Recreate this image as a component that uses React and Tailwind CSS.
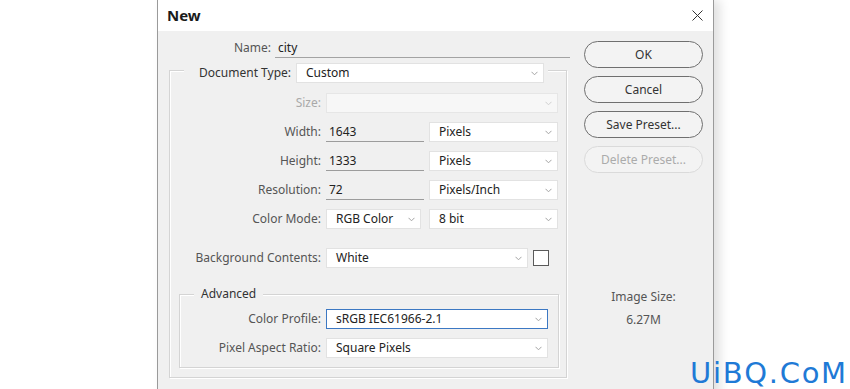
import React from "react";

const font = { fontFamily: '"Noto Sans", "Open Sans", sans-serif' };

function Chevron({ light }) {
  return (
    <svg width="7" height="5" viewBox="0 0 7 5" className="shrink-0">
      <polyline
        points="0.5,0.8 3.5,3.8 6.5,0.8"
        fill="none"
        stroke={light ? "#cfcfcf" : "#a3a3a3"}
        strokeWidth="1"
      />
    </svg>
  );
}

function Select({ value, width, disabled, focused }) {
  return (
    <div
      className={
        "flex items-center justify-between h-5 pl-[9px] pr-[5px] shrink-0 border " +
        (focused
          ? "border-[#3c78c3] bg-white"
          : disabled
          ? "border-[#e6e6e6] bg-[#f7f7f7]"
          : "border-[#e2e2e2] bg-white")
      }
      style={{ width }}
    >
      <span className="text-[#222] whitespace-nowrap">{value}</span>
      <Chevron light={disabled} />
    </div>
  );
}

function Field({ value }) {
  return (
    <div className="w-[98px] h-5 shrink-0 border-b border-[#9c9c9c] flex items-center pl-[3px] text-[#222]">
      {value}
    </div>
  );
}

function Row({ label, labelWidth, disabled, children }) {
  return (
    <div className="flex items-center h-5 gap-[5px]">
      <span
        className={
          "text-right whitespace-nowrap shrink-0 " + (disabled ? "text-[#a9a9a9]" : "text-[#555]")
        }
        style={{ width: labelWidth }}
      >
        {label}
      </span>
      {children}
    </div>
  );
}

function Button({ children, disabled }) {
  return (
    <div
      className={
        "h-[27px] rounded-full border flex items-center justify-center bg-[#f3f3f3] " +
        (disabled ? "border-[#dadada] text-[#ababab]" : "border-[#6f6f6f] text-[#333]")
      }
    >
      {children}
    </div>
  );
}

export default function App() {
  return (
    <div className="relative h-[389px] w-[850px] overflow-hidden bg-white text-[12px]" style={font}>
      <div className="ml-[157px] w-[557px] h-[420px] border-x border-[#9a9a9a] bg-[#f0f0f0] shadow-[6px_0_10px_rgba(0,0,0,0.12)]">
        {/* title bar */}
        <div className="h-[31px] bg-white flex items-center justify-between pl-[9px] pr-[10px]">
          <span className="text-[15px] font-bold text-[#1a1a1a]">New</span>
          <svg width="11" height="11" viewBox="0 0 11 11">
            <path d="M0.5 0.5 L10.5 10.5 M10.5 0.5 L0.5 10.5" stroke="#333" strokeWidth="1" />
          </svg>
        </div>

        <div className="flex">
          {/* left column */}
          <div className="w-[426px] shrink-0">
            <div className="mt-[7px] flex items-center h-5">
              <span className="w-[113px] text-right text-[#555]">Name:</span>
              <div className="ml-[4px] w-[295px] h-5 border-b border-[#a3a3a3] pl-[3px] flex items-center text-[#222]">
                city
              </div>
            </div>

            <div className="mt-[12px] ml-[11px] w-[398px] border border-[#d4d4d4] pb-[9px] shadow-[1px_1px_0_#fff,inset_1px_1px_0_#fff]">
              <div className="-mt-[8px] ml-[14px] w-fit bg-[#f0f0f0] pl-[15px] pr-[4px] flex items-center gap-[5px] h-5">
                <span className="w-[92px] text-right whitespace-nowrap text-[#333]">Document Type:</span>
                <Select value="Custom" width={248} />
              </div>

              <div className="mt-[10px] flex flex-col gap-[9px]">
                <Row label="Size:" labelWidth={151} disabled>
                  <Select value="" width={232} disabled />
                </Row>
                <Row label="Width:" labelWidth={151}>
                  <Field value="1643" />
                  <Select value="Pixels" width={129} />
                </Row>
                <Row label="Height:" labelWidth={151}>
                  <Field value="1333" />
                  <Select value="Pixels" width={129} />
                </Row>
                <Row label="Resolution:" labelWidth={151}>
                  <Field value="72" />
                  <Select value="Pixels/Inch" width={129} />
                </Row>
                <Row label="Color Mode:" labelWidth={151}>
                  <Select value="RGB Color" width={95} />
                  <div className="ml-[3px]">
                    <Select value="8 bit" width={129} />
                  </div>
                </Row>
              </div>

              <div className="mt-[19px]">
                <Row label="Background Contents:" labelWidth={151}>
                  <Select value="White" width={202} />
                  <div className="w-4 h-4 border border-[#5a5a5a] bg-white" />
                </Row>
              </div>

              <div className="mt-[26px] ml-[9px] w-[380px] border border-[#d4d4d4] pb-[9px] shadow-[1px_1px_0_#fff,inset_1px_1px_0_#fff]">
                <div className="-mt-[10px] ml-[14px] w-fit bg-[#f0f0f0] px-[7px] h-[18px] leading-[18px] text-[#333]">
                  Advanced
                </div>
                <div className="mt-[6px] flex flex-col gap-[9px]">
                  <Row label="Color Profile:" labelWidth={141}>
                    <Select value="sRGB IEC61966-2.1" width={222} focused />
                  </Row>
                  <Row label="Pixel Aspect Ratio:" labelWidth={141}>
                    <Select value="Square Pixels" width={222} />
                  </Row>
                </div>
              </div>
            </div>
          </div>

          {/* right column */}
          <div className="w-[119px] shrink-0 pt-[10px]">
            <div className="flex flex-col gap-[8px]">
              <Button>OK</Button>
              <Button>Cancel</Button>
              <Button>Save Preset...</Button>
              <Button disabled>Delete Preset...</Button>
            </div>
            <div className="mt-[116px] h-4 leading-4 text-center text-[#555]">Image Size:</div>
            <div className="mt-[7px] h-4 leading-4 text-center text-[#555]">6.27M</div>
          </div>
        </div>
      </div>

      <div
        className="absolute left-[690px] top-[359px] text-[29px] leading-none tracking-[1.7px] text-[#1f7ad6]"
        style={{ fontFamily: '"DejaVu Sans", sans-serif' }}
      >
        UiBQ.CoM
      </div>
    </div>
  );
}
